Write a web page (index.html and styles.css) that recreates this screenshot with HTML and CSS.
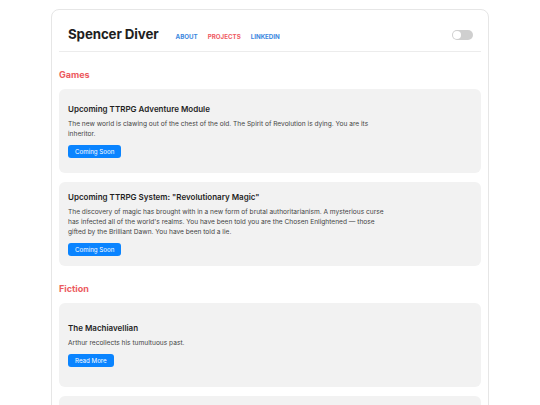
FILE: index.html
```html
<!DOCTYPE html>
<html lang="en">
<head>
  <meta charset="UTF-8" />
  <meta name="viewport" content="width=device-width, initial-scale=1.0"/>
  <title>Spencer Diver - Projects</title>
  <link rel="stylesheet" href="styles.css">
</head>
<body>
  <div class="container">
    <header class="header">
      <div class="brand">
        <h1 class="name">Spencer Diver</h1>
        <nav class="nav">
          <a href="#" class="nav-link">About</a>
          <a href="#" class="nav-link active">Projects</a>
          <a href="#" class="nav-link">LinkedIn</a>
        </nav>
      </div>
      <div class="toggle"><span class="knob"></span></div>
    </header>

    <section class="section">
      <h2 class="section-title">Games</h2>
      <div class="card">
        <h3 class="card-title">Upcoming TTRPG Adventure Module</h3>
        <p class="card-text">The new world is clawing out of the chest of the old. The Spirit of Revolution is dying. You are its inheritor.</p>
        <a href="#" class="btn">Coming Soon</a>
      </div>
      <div class="card">
        <h3 class="card-title">Upcoming TTRPG System: "Revolutionary Magic"</h3>
        <p class="card-text">The discovery of magic has brought with in a new form of brutal authoritarianism. A mysterious curse has infected all of the world's realms. You have been told you are the Chosen Enlightened — those gifted by the Brilliant Dawn. You have been told a lie.</p>
        <a href="#" class="btn">Coming Soon</a>
      </div>
    </section>

    <section class="section">
      <h2 class="section-title">Fiction</h2>
      <div class="card">
        <h3 class="card-title">The Machiavellian</h3>
        <p class="card-text">Arthur recollects his tumultuous past.</p>
        <a href="#" class="btn">Read More</a>
      </div>
      <div class="card"></div>
    </section>
  </div>
</body>
</html>
```

FILE: styles.css
```css
* {
  margin: 0;
  padding: 0;
  box-sizing: border-box;
}

body {
  font-family: 'Inter', 'Liberation Sans', sans-serif;
  background: #fff;
  color: #333;
}

.container {
  max-width: 438px;
  margin: 9px auto 0;
  padding: 0 7px 20px;
  border: 1px solid #e6e6e6;
  border-radius: 8px;
}

.header {
  display: flex;
  justify-content: space-between;
  align-items: center;
  padding: 16px 8px 8px 9px;
  border-bottom: 1px solid #ececec;
}

.brand {
  display: flex;
  align-items: baseline;
  gap: 17px;
}

.name {
  font-size: 13.3px;
  line-height: 17px;
  font-weight: 700;
  color: #1e1e1e;
  letter-spacing: -0.1px;
}

.nav {
  display: flex;
  gap: 10px;
}

.nav-link {
  font-size: 6.2px;
  font-weight: 700;
  text-transform: uppercase;
  text-decoration: none;
  color: #3b87e0;
}

.nav-link.active {
  color: #ef5a5f;
}

.toggle {
  width: 21px;
  height: 10px;
  border-radius: 5px;
  background: #cfcfcf;
  padding: 1px;
  margin-top: 1px;
}

.knob {
  display: block;
  width: 8px;
  height: 8px;
  border-radius: 50%;
  background: #fff;
}

.section-title {
  font-size: 9px;
  line-height: 12px;
  font-weight: 700;
  color: #ec5a5e;
  margin: 17px 0 8px;
}

.card {
  height: 84px;
  display: flex;
  flex-direction: column;
  justify-content: center;
  align-items: flex-start;
  padding: 0 9px;
  background: #f2f2f2;
  border-radius: 6px;
  margin-bottom: 9px;
}

.card-title {
  font-size: 8px;
  line-height: 11px;
  font-weight: 600;
  color: #1f1f1f;
  margin-bottom: 4px;
}

.card-text {
  font-size: 6.6px;
  line-height: 10px;
  color: #444;
  max-width: 318px;
}

.btn {
  display: inline-block;
  margin-top: 6px;
  height: 13px;
  line-height: 13px;
  padding: 0 7px;
  font-size: 6.2px;
  color: #fff;
  background: #0a84ff;
  border-radius: 3px;
  text-decoration: none;
}
```
